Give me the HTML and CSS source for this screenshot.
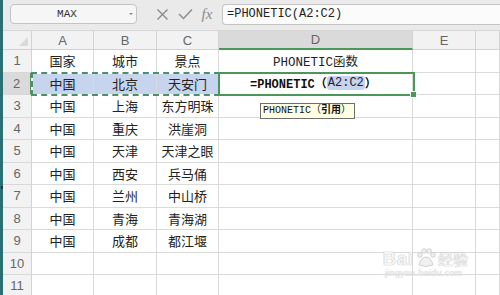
FILE: index.html
```html
<!DOCTYPE html>
<html lang="zh">
<head>
<meta charset="utf-8">
<title>PHONETIC</title>
<link rel="stylesheet" href="styles.css">
</head>
<body>
<div class="app">
  <div class="strip"><span class="dot"></span></div>
  <div class="main">
    <div class="toolbar">
      <div class="namebox"><span class="name">MAX</span><span class="caret"></span></div>
      <div class="ico ico-x">
        <svg width="13" height="13" viewBox="0 0 13 13"><path d="M1.5 1.5 L11.5 11.5 M11.5 1.5 L1.5 11.5" stroke="#8a8a8a" stroke-width="1.4" fill="none"/></svg>
      </div>
      <div class="ico ico-ok">
        <svg width="15" height="12" viewBox="0 0 15 12"><path d="M1 6 L5.5 10.5 L14 1.5" stroke="#8a8a8a" stroke-width="1.4" fill="none"/></svg>
      </div>
      <div class="ico ico-fx">fx</div>
      <div class="formula">=PHONETIC(A2:C2)</div>
    </div>
    <div class="sheet">
      <div class="corner"><span class="tri"></span></div>
      <div class="ch">A</div><div class="ch">B</div><div class="ch">C</div><div class="ch ch-on">D</div><div class="ch">E</div><div class="ch"></div>

      <div class="rh">1</div><div class="c">国家</div><div class="c">城市</div><div class="c">景点</div><div class="c mono">PHONETIC函数</div><div class="c"></div><div class="c"></div>

      <div class="rh rh-on">2</div><div class="c sel">中国</div><div class="c sel">北京</div><div class="c sel">天安门</div><div class="c edit">=PHONETIC（<span class="ref">A2:C2</span>）</div><div class="c"></div><div class="c"></div>

      <div class="rh">3</div><div class="c">中国</div><div class="c">上海</div><div class="c">东方明珠</div><div class="c"></div><div class="c"></div><div class="c"></div>

      <div class="rh">4</div><div class="c">中国</div><div class="c">重庆</div><div class="c">洪崖洞</div><div class="c"></div><div class="c"></div><div class="c"></div>

      <div class="rh">5</div><div class="c">中国</div><div class="c">天津</div><div class="c">天津之眼</div><div class="c"></div><div class="c"></div><div class="c"></div>

      <div class="rh">6</div><div class="c">中国</div><div class="c">西安</div><div class="c">兵马俑</div><div class="c"></div><div class="c"></div><div class="c"></div>

      <div class="rh">7</div><div class="c">中国</div><div class="c">兰州</div><div class="c">中山桥</div><div class="c"></div><div class="c"></div><div class="c"></div>

      <div class="rh">8</div><div class="c">中国</div><div class="c">青海</div><div class="c">青海湖</div><div class="c"></div><div class="c"></div><div class="c"></div>

      <div class="rh">9</div><div class="c">中国</div><div class="c">成都</div><div class="c">都江堰</div><div class="c"></div><div class="c"></div><div class="c"></div>

      <div class="rh">10</div><div class="c"></div><div class="c"></div><div class="c"></div><div class="c"></div><div class="c"></div><div class="c"></div>

      <div class="rh">11</div><div class="c"></div><div class="c"></div><div class="c"></div><div class="c"></div><div class="c"></div><div class="c"></div>

      <div class="selbox"></div>
      <div class="active"><span class="handle"></span></div>
      <div class="tip">PHONETIC（<b>引用</b>）</div>
      <div class="mark">
        <div class="mark-top"><span class="bai">Bai</span><svg class="paw" width="22" height="20" viewBox="0 0 22 20"><circle cx="5" cy="7" r="2.3"/><circle cx="9" cy="3" r="2.3"/><circle cx="14" cy="3" r="2.3"/><circle cx="18" cy="7" r="2.3"/><path d="M4 17 Q6 9 11 9 Q16 9 18 17 Q11 20 4 17Z"/></svg><span class="jy">经验</span></div>
        <div class="mark-url">jingyan.baidu.com</div>
      </div>
    </div>
  </div>
</div>
</body>
</html>
```
FILE: styles.css
```css
html, body {
  margin: 0;
  padding: 0;
}
body {
  width: 500px;
  height: 295px;
  overflow: hidden;
  background: #ffffff;
  font-family: "Noto Sans CJK SC", "Liberation Sans", sans-serif;
}
.app {
  display: flex;
  width: 500px;
  height: 295px;
}
.strip {
  width: 3px;
  flex: none;
  background: #2c6f72;
  position: relative;
}
.dot {
  position: absolute;
  left: 1px;
  top: 186px;
  width: 3px;
  height: 3px;
  background: #333;
}
.main {
  flex: 1;
  display: flex;
  flex-direction: column;
  min-width: 0;
}
.toolbar {
  height: 31px;
  flex: none;
  box-sizing: border-box;
  background: #eaeaea;
  border-bottom: 1px solid #d6d6d6;
  display: flex;
  align-items: flex-start;
  padding-top: 4px;
}
.namebox {
  margin-left: 7px;
  width: 127px;
  height: 20px;
  box-sizing: border-box;
  background: #f6f6f6;
  border: 1px solid #c4c4c4;
  border-radius: 4px;
  display: flex;
  align-items: center;
  position: relative;
}
.name {
  flex: 1;
  text-align: center;
  font-family: "Liberation Mono", monospace;
  font-size: 11px;
  color: #333;
  padding-right: 6px;
}
.caret {
  width: 0;
  height: 0;
  border-left: 2px solid transparent;
  border-right: 2px solid transparent;
  border-top: 2px solid #888;
  margin-right: 3px;
}
.ico {
  width: 20px;
  height: 20px;
  display: flex;
  align-items: center;
  justify-content: center;
}
.ico-x { margin-left: 15px; }
.ico-ok { margin-left: 3px; }
.ico-fx {
  margin-left: 2px;
  font-family: "Liberation Serif", serif;
  font-style: italic;
  font-size: 15px;
  color: #8a8a8a;
  line-height: 20px;
}
.formula {
  margin-left: 5px;
  flex: 1;
  height: 21px;
  box-sizing: border-box;
  background: #fbfbfb;
  border: 1px solid #c4c4c4;
  border-right: none;
  border-radius: 4px 0 0 4px;
  padding-left: 4px;
  font-family: "Liberation Mono", monospace;
  font-size: 12px;
  line-height: 19px;
  color: #222;
}
.sheet {
  flex: 1;
  position: relative;
  display: grid;
  grid-template-columns: 29px 62px 63px 62px 194px 63px 1fr;
  grid-template-rows: 19px repeat(11, 22.5px);
  overflow: hidden;
}
.sheet > div {
  box-sizing: border-box;
}
.corner {
  background: #f2f2f2;
  border-right: 1px solid #d2d2d2;
  border-bottom: 1px solid #d2d2d2;
  position: relative;
}
.tri {
  position: absolute;
  right: 3px;
  bottom: 3px;
  width: 0;
  height: 0;
  border-left: 9px solid transparent;
  border-bottom: 9px solid #d9d9d9;
}
.ch {
  background: #f2f2f2;
  border-right: 1px solid #d2d2d2;
  border-bottom: 1px solid #d2d2d2;
  color: #666;
  font-family: "Liberation Sans", sans-serif;
  font-size: 13px;
  display: flex;
  align-items: center;
  justify-content: center;
}
.ch-on {
  background: #dadada;
  border-bottom: 2px solid #4b9659;
}
.rh {
  background: #f2f2f2;
  border-right: 1px solid #d2d2d2;
  border-bottom: 1px solid #d8d8d8;
  color: #666;
  font-family: "Liberation Sans", sans-serif;
  font-size: 13px;
  display: flex;
  align-items: center;
  justify-content: center;
}
.rh-on {
  background: #dadada;
  border-right: 2px solid #4b9659;
}
.c {
  border-right: 1px solid #dadada;
  border-bottom: 1px solid #dadada;
  font-size: 13px;
  color: #222;
  display: flex;
  align-items: center;
  justify-content: center;
  white-space: nowrap;
}
.c.sel {
  background: #c6d4ee;
}
.c.mono {
  font-family: "Liberation Mono", "Noto Sans CJK SC", monospace;
  font-size: 12.5px;
  color: #222;
}
.c.edit {
  font-family: "Liberation Mono", "Noto Sans CJK SC", monospace;
  font-weight: bold;
  font-size: 12px;
  color: #111;
  justify-content: flex-start;
  padding-left: 31px;
}
.ref {
  background: #c6d4ee;
  border-radius: 3px;
  padding: 0 1px;
  font-weight: normal;
  color: #223;
}
.selbox {
  position: absolute;
  left: 28px;
  top: 41px;
  width: 189px;
  height: 24px;
  border: 2px solid #ffffff;
  pointer-events: none;
}
.selbox::after {
  content: "";
  position: absolute;
  left: -2px;
  top: -2px;
  right: -2px;
  bottom: -2px;
  border: 2px dashed #4d8f6a;
}
.active {
  position: absolute;
  left: 215px;
  top: 41px;
  width: 197px;
  height: 24px;
  border: 2px solid #4b9659;
  box-sizing: border-box;
}
.handle {
  position: absolute;
  right: -4px;
  bottom: -4px;
  width: 5px;
  height: 5px;
  background: #4b9659;
  border: 1px solid #ffffff;
}
.tip {
  position: absolute;
  left: 257px;
  top: 72px;
  height: 16px;
  box-sizing: border-box;
  padding: 0 3px 0 2px;
  background: #ffffe1;
  border: 1px solid #6e6e6e;
  font-family: "Liberation Mono", "Noto Sans CJK SC", monospace;
  font-size: 10px;
  line-height: 14px;
  color: #111;
  white-space: nowrap;
}
.tip b {
  font-weight: bold;
}
.mark {
  position: absolute;
  left: 380px;
  top: 215px;
  display: flex;
  flex-direction: column;
  align-items: flex-start;
}
.mark-top {
  display: flex;
  align-items: flex-end;
  height: 22px;
}
.bai {
  font-family: "Liberation Sans", sans-serif;
  font-weight: bold;
  font-size: 18px;
  line-height: 18px;
  color: #f5f5f5;
  text-shadow: 0 0 1px #b8b8b8, 0 0 1px #b8b8b8;
  letter-spacing: 1px;
}
.paw {
  fill: #f0f0f0;
  stroke: #c8c8c8;
  stroke-width: 0.8;
  margin: 0 1px;
}
.jy {
  font-size: 15px;
  line-height: 18px;
  color: #f3f3f3;
  text-shadow: 0 0 1px #b8b8b8, 0 0 1px #b8b8b8;
}
.mark-url {
  font-family: "Liberation Sans", sans-serif;
  font-size: 9px;
  line-height: 10px;
  color: #ededed;
  text-shadow: 0 0 1px #c0c0c0;
  margin-left: 2px;
  letter-spacing: 0.3px;
}
```
